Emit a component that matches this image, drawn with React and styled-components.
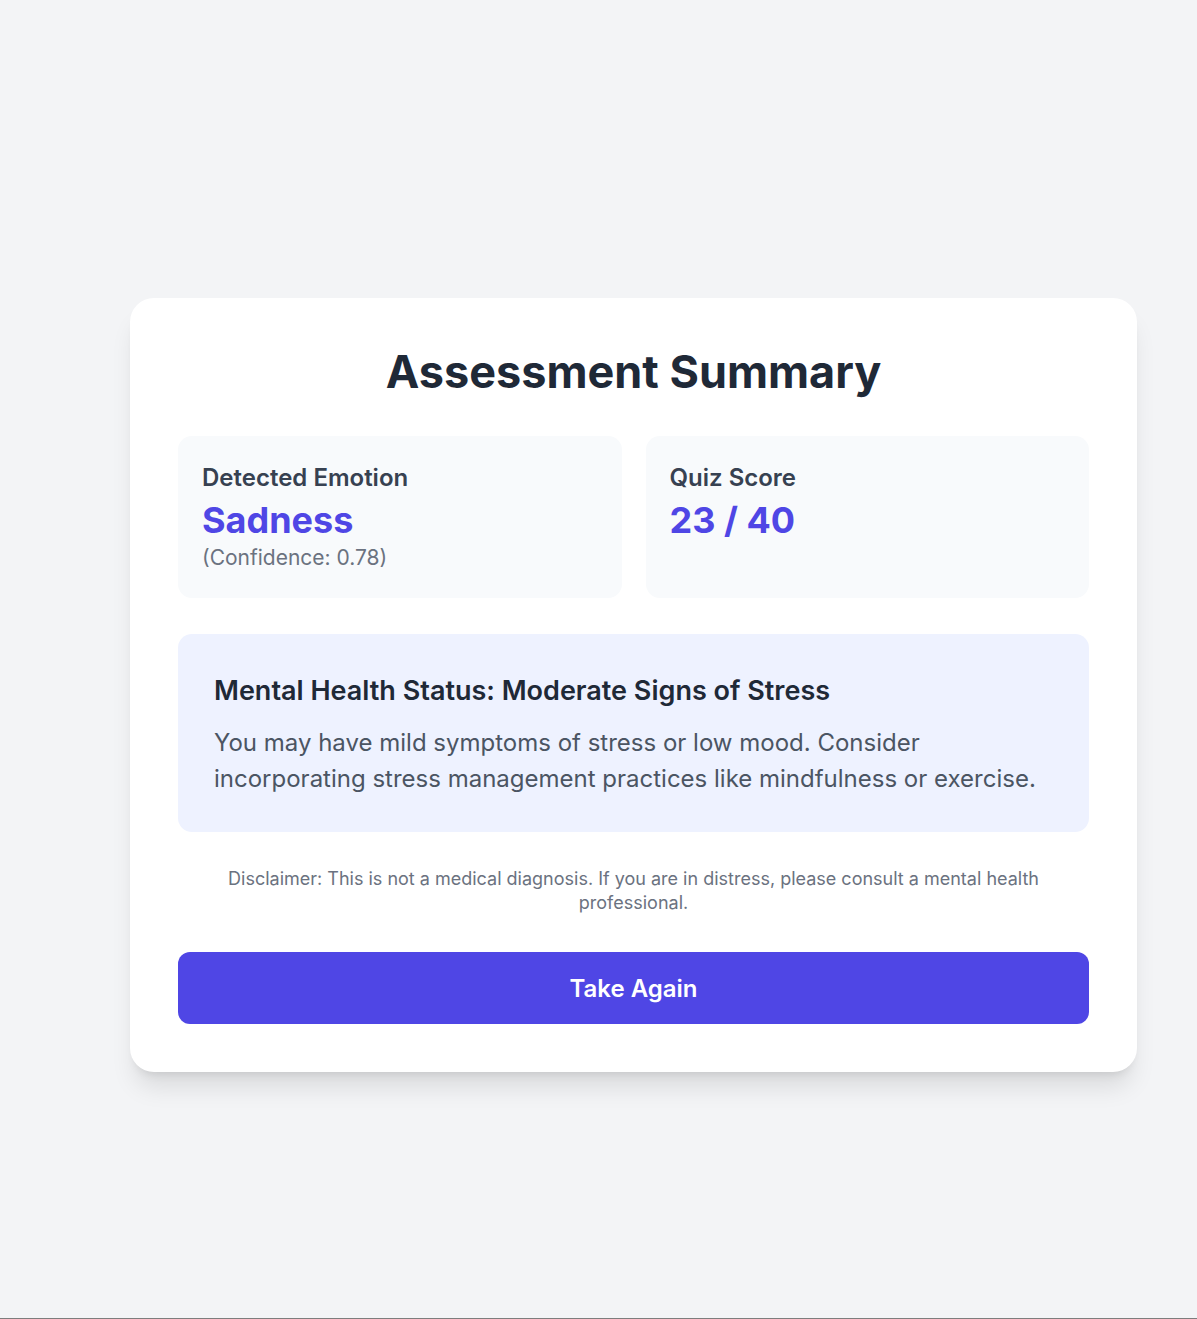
import React from "react";
import styled, { createGlobalStyle } from "styled-components";

const Global = createGlobalStyle`
  html, body { margin: 0; padding: 0; }
  body { background: #f3f4f6; font-family: Inter, "Noto Sans", sans-serif; }
  * { box-sizing: border-box; }
`;

const Page = styled.div`
  min-height: 1319px;
  background: #f3f4f6;
  padding: 298px 0 0 130px;
  border-bottom: 1px solid #7d7d7d;
`;

const Card = styled.section`
  width: 1007px;
  background: #ffffff;
  border-radius: 24px;
  padding: 48px;
  box-shadow: 0 20px 25px -5px rgba(0, 0, 0, 0.1), 0 8px 10px -6px rgba(0, 0, 0, 0.1);
  display: flex;
  flex-direction: column;
`;

const Title = styled.h1`
  margin: 0 0 38px;
  text-align: center;
  font-size: 45px;
  line-height: 52px;
  font-weight: 700;
  color: #1f2937;
`;

const StatGrid = styled.div`
  display: grid;
  grid-template-columns: 1fr 1fr;
  gap: 24px;
  margin-bottom: 36px;
`;

const StatBox = styled.div`
  background: #f8fafc;
  border-radius: 14px;
  padding: 24px;
  height: 162px;
  display: flex;
  flex-direction: column;
`;

const StatLabel = styled.div`
  font-size: 24px;
  line-height: 36px;
  font-weight: 600;
  color: #374151;
`;

const StatValue = styled.div`
  font-size: 36px;
  line-height: 48px;
  font-weight: 700;
  color: #4f46e5;
`;

const StatNote = styled.div`
  font-size: 21px;
  line-height: 28px;
  color: #6b7280;
`;

const StatusBox = styled.div`
  background: #eef2ff;
  border-radius: 14px;
  padding: 39px 36px 35px;
  margin-bottom: 35px;
`;

const StatusTitle = styled.h2`
  margin: 0 0 16px;
  font-size: 27px;
  line-height: 36px;
  font-weight: 600;
  color: #1f2937;
`;

const StatusText = styled.p`
  margin: 0;
  font-size: 24px;
  line-height: 36px;
  color: #4b5563;
`;

const Disclaimer = styled.p`
  margin: 0 0 37px;
  text-align: center;
  font-size: 18px;
  line-height: 24px;
  color: #6b7280;
  padding: 0 40px;
`;

const PrimaryButton = styled.button`
  height: 72px;
  width: 100%;
  border: none;
  border-radius: 12px;
  background: #4f46e5;
  color: #ffffff;
  font-family: inherit;
  font-size: 24px;
  font-weight: 600;
  cursor: pointer;
`;

export default function App() {
  return (
    <>
      <Global />
      <Page>
        <Card>
          <Title>Assessment Summary</Title>
          <StatGrid>
            <StatBox>
              <StatLabel>Detected Emotion</StatLabel>
              <StatValue>Sadness</StatValue>
              <StatNote>(Confidence: 0.78)</StatNote>
            </StatBox>
            <StatBox>
              <StatLabel>Quiz Score</StatLabel>
              <StatValue>23 / 40</StatValue>
            </StatBox>
          </StatGrid>
          <StatusBox>
            <StatusTitle>Mental Health Status: Moderate Signs of Stress</StatusTitle>
            <StatusText>
              You may have mild symptoms of stress or low mood. Consider incorporating stress
              management practices like mindfulness or exercise.
            </StatusText>
          </StatusBox>
          <Disclaimer>
            Disclaimer: This is not a medical diagnosis. If you are in distress, please consult a
            mental health professional.
          </Disclaimer>
          <PrimaryButton>Take Again</PrimaryButton>
        </Card>
      </Page>
    </>
  );
}
